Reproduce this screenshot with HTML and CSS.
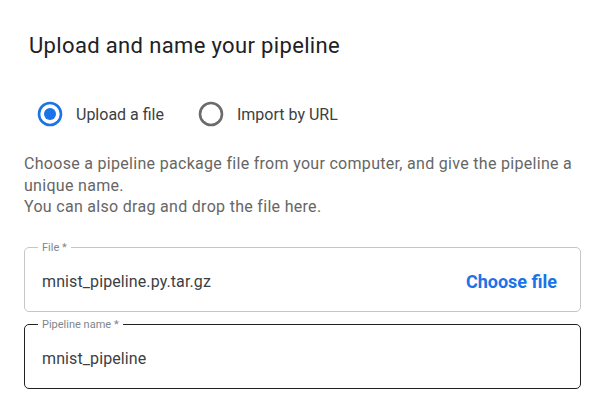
FILE: index.html
```html
<!DOCTYPE html>
<html>
<head>
<meta charset="utf-8">
<link rel="stylesheet" href="styles.css">
</head>
<body>
<div class="dialog">
  <h1 class="title">Upload and name your pipeline</h1>
  <div class="radios">
    <label class="radio">
      <svg class="radio-icon" width="26" height="26" viewBox="0 0 26 26"><circle cx="13" cy="13" r="11" fill="none" stroke="#1a73e8" stroke-width="2.6"/><circle cx="13" cy="13" r="6" fill="#1a73e8"/></svg>
      <span>Upload a file</span>
    </label>
    <label class="radio">
      <svg class="radio-icon" width="26" height="26" viewBox="0 0 26 26"><circle cx="13" cy="13" r="11" fill="none" stroke="#6b6b6b" stroke-width="2.6"/></svg>
      <span>Import by URL</span>
    </label>
  </div>
  <p class="desc">Choose a pipeline package file from your computer, and give the pipeline a unique name.<br>You can also drag and drop the file here.</p>
  <fieldset class="field">
    <legend class="legend">File *</legend>
    <div class="field-row">
      <span class="value">mnist_pipeline.py.tar.gz</span>
      <span class="choose">Choose file</span>
    </div>
  </fieldset>
  <fieldset class="field field-active">
    <legend class="legend">Pipeline name *</legend>
    <div class="field-row">
      <span class="value">mnist_pipeline</span>
    </div>
  </fieldset>
</div>
</body>
</html>
```

FILE: styles.css
```css
html, body {
  margin: 0;
  padding: 0;
  background: #ffffff;
}
body {
  font-family: Roboto, "Noto Sans", Arial, sans-serif;
  color: #202124;
  width: 600px;
  height: 412px;
  overflow: hidden;
}
.dialog {
  padding: 0 19px 0 24px;
}
.title {
  margin: 0;
  padding: 32px 0 0 5px;
  font-size: 22px;
  font-weight: 400;
  letter-spacing: 0.35px;
  line-height: 28px;
  color: #202124;
}
.radios {
  display: flex;
  align-items: center;
  margin-top: 41px;
  padding-left: 13px;
  gap: 34px;
}
.radio {
  display: flex;
  align-items: center;
  gap: 13px;
  font-size: 16px;
  color: #3c4043;
}
.radio-icon {
  display: block;
}
.desc {
  margin: 26px 0 0 0;
  font-size: 16px;
  letter-spacing: 0.3px;
  line-height: 21.5px;
  color: #666666;
}
.field {
  margin: 24px 0 0 0;
  padding: 0 23px 0 13px;
  border: 1px solid #c4c7c5;
  border-radius: 5px;
  height: 70px;
  box-sizing: border-box;
}
.field-active {
  margin-top: 7px;
  border-color: #202124;
}
.legend {
  padding: 0 4px;
  font-size: 11px;
  line-height: 12px;
  color: #80868b;
}
.field-row {
  display: flex;
  align-items: center;
  justify-content: space-between;
  height: 56px;
  padding-left: 4px;
}
.value {
  font-size: 16px;
  letter-spacing: 0.1px;
  color: #3c4043;
}
.choose {
  font-size: 18px;
  font-weight: 700;
  color: #1a73e8;
}
```
